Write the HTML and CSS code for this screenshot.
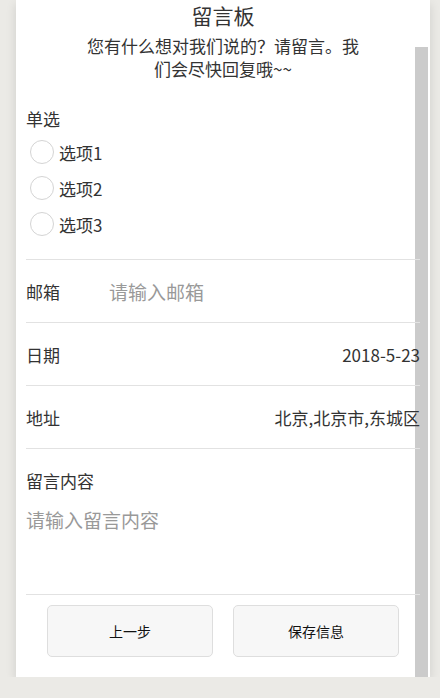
FILE: index.html
```html
<!DOCTYPE html>
<html lang="zh-CN">
<head>
    <meta charset="UTF-8">
    <meta name="viewport" content="width=device-width, initial-scale=1.0">
    <link rel="stylesheet" href="styles.css">
    <title>留言板</title>
</head>
<body>
    <div class="page">
        <div class="scrollbar"></div>
        <div class="header">
            <h1 class="title">留言板</h1>
            <p class="subtitle">您有什么想对我们说的？请留言。我们会尽快回复哦~~</p>
        </div>

        <div class="form">
            <div class="group radios">
                <div class="group-label">单选</div>
                <label class="radio"><input type="radio" name="opt"><span>选项1</span></label>
                <label class="radio"><input type="radio" name="opt"><span>选项2</span></label>
                <label class="radio"><input type="radio" name="opt"><span>选项3</span></label>
            </div>

            <div class="row">
                <span class="row-label">邮箱</span>
                <input type="text" class="row-input" placeholder="请输入邮箱">
            </div>

            <div class="row">
                <span class="row-label">日期</span>
                <span class="row-value">2018-5-23</span>
            </div>

            <div class="row">
                <span class="row-label">地址</span>
                <span class="row-value">北京,北京市,东城区</span>
            </div>

            <div class="group message">
                <div class="group-label">留言内容</div>
                <textarea class="message-input" placeholder="请输入留言内容"></textarea>
            </div>
        </div>

        <div class="actions">
            <button class="btn">上一步</button>
            <button class="btn">保存信息</button>
        </div>
    </div>
</body>
</html>
```

FILE: styles.css
```css
body {
    margin: 0;
    background-color: #ebeae6;
    font-family: "Noto Sans CJK SC", "Noto Sans", sans-serif;
    color: #333;
}

.page {
    position: relative;
    width: 414px;
    margin-left: 16px;
    padding-bottom: 20px;
    background-color: white;
    box-shadow: 0 4px 10px rgba(0, 0, 0, 0.12);
}

/* grey bar on the right edge */
.scrollbar {
    position: absolute;
    top: 47px;
    right: 2px;
    bottom: 0;
    width: 13px;
    background-color: #cbcbcb;
}

.header,
.form,
.actions {
    position: relative;
}

.header {
    text-align: center;
}

.title {
    margin: 0;
    padding-top: 1px;
    font-size: 21px;
    font-weight: normal;
    line-height: 28px;
}

.subtitle {
    width: 285px;
    margin: 5px auto 0;
    font-size: 17px;
    line-height: 23px;
}

.form {
    padding: 0 10px;
}

.group-label {
    font-size: 17px;
    line-height: 24px;
}

.radios {
    padding-top: 27px;
    padding-bottom: 17px;
    border-bottom: 1px solid #e2e2e2;
}

.radios .group-label {
    margin-bottom: 3px;
}

.radio {
    display: flex;
    align-items: center;
    height: 36px;
    padding-left: 4px;
    font-size: 17px;
}

.radio input {
    appearance: none;
    width: 24px;
    height: 24px;
    margin: 0 5px 0 0;
    border: 1px solid #d4d4d4;
    border-radius: 50%;
    background: transparent;
}

.row {
    display: flex;
    align-items: center;
    height: 62px;
    border-bottom: 1px solid #e2e2e2;
    font-size: 17px;
}

.row-label {
    width: 83px;
    flex-shrink: 0;
}

.row-input {
    flex: 1;
    border: none;
    padding: 0;
    background: transparent;
    font-family: inherit;
    font-size: 19px;
    color: #333;
    outline: none;
}

.row-input::placeholder,
.message-input::placeholder {
    color: #999;
}

.row-value {
    margin-left: auto;
}

.message {
    padding-top: 20px;
    border-bottom: 1px solid #e2e2e2;
}

.message-input {
    display: block;
    width: 100%;
    height: 88px;
    margin-top: 13px;
    padding: 0;
    border: none;
    background: transparent;
    resize: none;
    font-family: inherit;
    font-size: 19px;
    line-height: 28px;
    color: #333;
    outline: none;
}

.actions {
    display: flex;
    justify-content: center;
    gap: 20px;
    padding-top: 10px;
}

.btn {
    width: 166px;
    height: 52px;
    background-color: #f7f7f7;
    border: 1px solid #dedede;
    border-radius: 5px;
    font-family: inherit;
    font-size: 14px;
    color: #111;
    cursor: pointer;
}
```
